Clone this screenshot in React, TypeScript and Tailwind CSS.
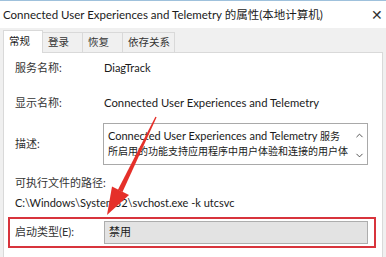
import React from 'react';
import { ChevronUp, ChevronDown } from 'lucide-react';

const font = { fontFamily: 'Lato, "Noto Sans CJK SC", sans-serif' };

export default function App() {
  const tabs = ['常规', '登录', '恢复', '依存关系'];

  return (
    <div
      className="relative w-[386px] h-[257px] overflow-hidden bg-[#f0f0f0] border-t border-[#9fc1dc] text-[#1a1a1a]"
      style={font}
    >
      {/* title bar */}
      <div className="h-[27px] bg-white flex items-center justify-between pl-[3px] pr-[3px]">
        <span className="text-[11.5px] leading-none whitespace-nowrap">Connected User Experiences and Telemetry 的属性(本地计算机)</span>
        <span className="text-[14px] leading-none text-[#333] font-light">✕</span>
      </div>

      {/* tabs */}
      <div className="flex items-end h-[24px] pl-[3px]">
        {tabs.map((t, i) => (
          <div
            key={t}
            className={
              i === 0
                ? 'h-[23px] bg-white border border-b-0 border-[#d9d9d9] pl-[5px] flex items-center text-[10.5px] -mb-px relative z-10'
                : 'h-[20px] border-t border-r border-[#d9d9d9] pl-[5px] flex items-center text-[10.5px] text-[#333]'
            }
            style={{ width: i === 3 ? 52 : 40 }}
          >
            {t}
          </div>
        ))}
      </div>

      {/* page */}
      <div className="ml-[3px] mr-[3px] bg-white border border-[#d9d9d9] h-[220px] pl-[11px] pr-[14px] pt-[4px] text-[11px]">
        <div className="flex items-center h-[20px] mt-[1px]">
          <span className="w-[89px] text-[#333]">服务名称:</span>
          <span>DiagTrack</span>
        </div>
        <div className="flex items-center h-[20px] mt-[15px]">
          <span className="w-[89px] text-[#333]">显示名称:</span>
          <span className="text-[11.3px]">Connected User Experiences and Telemetry</span>
        </div>
        <div className="flex items-center mt-[10px]">
          <span className="w-[88px] shrink-0 text-[#333]">描述:</span>
          <div className="w-[265px] shrink-0 h-[42px] border border-[#a9a9a9] flex">
            <div className="w-[247px] shrink-0 overflow-hidden pl-[4px] pt-[4px] leading-[15px]">
              <div className="whitespace-nowrap text-[11px]">
                Connected User Experiences and Telemetry <span className="text-[10px]">服务</span>
              </div>
              <div className="whitespace-nowrap text-[10px]">所启用的功能支持应用程序中用户体验和连接的用户体</div>
            </div>
            <div className="w-[16px] shrink-0 flex flex-col items-center justify-between pt-[6px] pb-[3px] text-[#333]">
              <ChevronUp size={11} strokeWidth={1.8} />
              <ChevronDown size={11} strokeWidth={1.8} />
            </div>
          </div>
        </div>
        <div className="h-[18px] flex items-center mt-[9px] text-[#333]">可执行文件的路径:</div>
        <div className="h-[18px] flex items-center mt-[2px]">C:\Windows\System32\svchost.exe -k utcsvc</div>
        <div className="-ml-[7px] w-[368px] h-[31px] mt-[5px] border-2 border-[#d8343c] flex items-center pl-[5px] pr-[6px]">
          <span className="w-[89px] text-[#333]">启动类型(E):</span>
          <div className="flex-1 h-[23px] bg-[#e3e3e3] border border-[#adadad] flex items-center pl-[4px]">禁用</div>
        </div>
      </div>

      {/* red arrow annotation */}
      <svg className="absolute left-0 top-0 pointer-events-none" width="386" height="257" viewBox="0 0 386 257">
        <polygon points="156.6,116.3 155.4,115.7 117.9,188.7 122.5,190.9" fill="#e5302a" />
        <polygon points="129,194 112,185.5 107,214" fill="#e5302a" />
      </svg>
    </div>
  );
}
